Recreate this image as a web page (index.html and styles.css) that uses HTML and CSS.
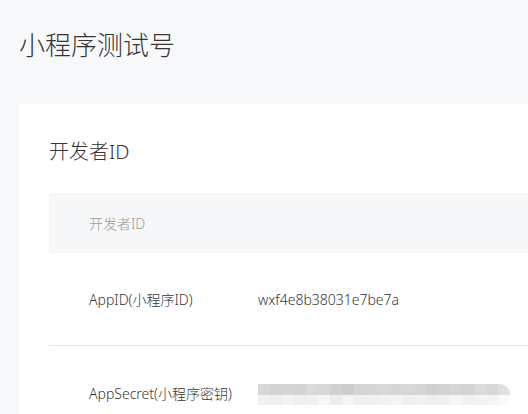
FILE: index.html
```html
<!DOCTYPE html>
<html lang="zh-CN">
<head>
<meta charset="utf-8">
<link rel="stylesheet" href="styles.css">
</head>
<body>
<div class="page">
  <h1 class="page-title">小程序测试号</h1>
  <div class="card">
    <h2 class="card-title">开发者ID</h2>
    <div class="table">
      <div class="thead">开发者ID</div>
      <div class="row">
        <div class="label">AppID(小程序ID)</div>
        <div class="value">wxf4e8b38031e7be7a</div>
      </div>
      <div class="row row-last">
        <div class="label">AppSecret(小程序密钥)</div>
        <div class="value">
          <div class="mosaic">
            <div class="mrow top">
              <i style="background:#d7d7d7"></i><i style="background:#d3d3d3"></i><i style="background:#d4d4d4"></i><i style="background:#d3d3d3"></i><i style="background:#dadada"></i><i style="background:#d8d8d8"></i><i style="background:#d1d1d1"></i><i style="background:#cdcdcd"></i><i style="background:#d5d5d5"></i><i style="background:#d6d6d6"></i><i style="background:#d8d8d8"></i><i style="background:#d6d6d6"></i><i style="background:#d7d7d7"></i><i style="background:#d5d5d5"></i><i style="background:#d0d0d0"></i><i style="background:#d2d2d2"></i><i style="background:#d6d6d6"></i><i style="background:#d4d4d4"></i><i style="background:#dbdbdb"></i><i style="background:#d7d7d7"></i><i style="background:#e0e0e0"></i>
            </div>
            <div class="mrow bottom">
              <i style="background:#f0f0f0"></i><i style="background:#eeeeee"></i><i style="background:#f3f3f3"></i><i style="background:#efefef"></i><i style="background:#f1f1f1"></i><i style="background:#f7f7f7"></i><i style="background:#ececec"></i><i style="background:#f4f4f4"></i><i style="background:#efefef"></i><i style="background:#f0f0f0"></i><i style="background:#f2f2f2"></i><i style="background:#f5f5f5"></i><i style="background:#efefef"></i><i style="background:#f1f1f1"></i><i style="background:#eeeeee"></i><i style="background:#f0f0f0"></i><i style="background:#f6f6f6"></i><i style="background:#f1f1f1"></i><i style="background:#f3f3f3"></i><i style="background:#f4f4f4"></i><i style="background:#f8f8f8"></i>
            </div>
          </div>
        </div>
      </div>
    </div>
  </div>
</div>
</body>
</html>
```
FILE: styles.css
```css
html, body {
  margin: 0;
  padding: 0;
  background: #f7f8fa;
  overflow: hidden;
}
body {
  font-family: "Noto Sans", "Noto Sans CJK SC", sans-serif;
  font-weight: 300;
  color: #353535;
}
.page {
  box-sizing: border-box;
  width: 528px;
  height: 414px;
  overflow: hidden;
  padding: 27px 0 0 19px;
}
.page-title {
  margin: 0;
  font-size: 26px;
  line-height: 36px;
  font-weight: 300;
  color: #353535;
}
.card {
  margin-top: 41px;
  background: #ffffff;
  border-radius: 4px 0 0 0;
  padding: 34px 0 0 30px;
}
.card-title {
  margin: 0;
  font-size: 20px;
  line-height: 28px;
  font-weight: 300;
  color: #353535;
}
.table {
  margin-top: 27px;
}
.thead {
  background: #f6f7f9;
  height: 60px;
  display: flex;
  align-items: center;
  padding-left: 40px;
  font-size: 14px;
  color: #9a9a9a;
}
.row {
  display: flex;
  align-items: center;
  height: 92px;
  border-bottom: 1px solid #e7e7eb;
  font-size: 14px;
  color: #353535;
}
.row-last {
  border-bottom: none;
  height: 94px;
}
.label {
  width: 169px;
  padding-left: 40px;
  flex: none;
}
.value {
  flex: 1;
}
.mosaic {
  width: 252px;
  border-radius: 0 10px 10px 0;
  overflow: hidden;
  margin-top: 3px;
}
.mrow {
  display: flex;
  height: 11px;
}
.mrow.bottom {
  height: 10px;
}
.mrow i {
  display: block;
  width: 12px;
  height: 100%;
}
```
